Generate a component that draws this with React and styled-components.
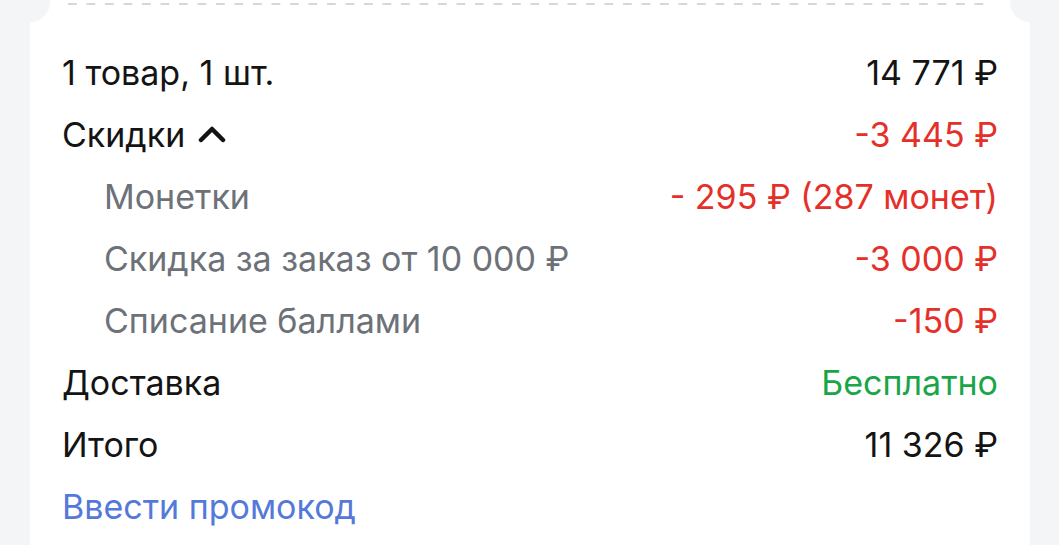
import React from 'react'
import styled, { createGlobalStyle } from 'styled-components'

const GlobalStyle = createGlobalStyle`
    html, body {
        margin: 0;
        padding: 0;
        background: #f4f5f7;
    }
    body {
        font-family: Inter, 'Noto Sans', sans-serif;
        -webkit-font-smoothing: antialiased;
    }
`

const Page = styled.div`
    width: 1059px;
    height: 545px;
    overflow: hidden;
    padding: 0 29px 0 30px;
    box-sizing: border-box;
`
const Card = styled.div`
    position: relative;
    background: #fff;
    height: 600px;
`
const Divider = styled.div`
    height: 8px;
    margin: 0 39px 0 38px;
    background-image: linear-gradient(to right, #d3d8df 50%, transparent 50%);
    background-size: 18.5px 2px;
    background-repeat: repeat-x;
    background-position: 0 3px;
`
const Notch = styled.div`
    position: absolute;
    top: -18px;
    ${props => (props.right ? 'right: -20px;' : 'left: -20px;')}
    width: 40px;
    height: 40px;
    border-radius: 50%;
    background: #f4f5f7;
`
const List = styled.div`
    padding: 33px 32px 0 32px;
    display: flex;
    flex-direction: column;
`
const Row = styled.div`
    height: 62px;
    display: flex;
    align-items: center;
    justify-content: space-between;
    font-size: 34px;
    padding-left: ${props => (props.sub ? '42px' : '0')};
`
const Label = styled.div`
    display: flex;
    align-items: center;
    gap: 13px;
    color: ${props => (props.sub ? '#6d7178' : '#141414')};
`
const Value = styled.div`
    color: ${props => props.color || '#141414'};
`
const PromoLink = styled.a`
    height: 62px;
    display: flex;
    align-items: center;
    font-size: 34px;
    color: #5479d9;
    text-decoration: none;
    cursor: pointer;
`

const RED = '#e5302a'
const GREEN = '#1aa548'

function ChevronUp() {
    return (
        <svg width='28' height='18' viewBox='0 0 28 18'>
            <path d='M3 15 L14 4 L25 15' fill='none' stroke='#141414' strokeWidth='4.5' strokeLinecap='round' strokeLinejoin='round' />
        </svg>
    )
}

const rows = [
    { label: '1 товар, 1 шт.', value: '14 771 ₽' },
    { label: 'Скидки', value: '-3 445 ₽', color: RED, toggle: true },
    { label: 'Монетки', value: '- 295 ₽ (287 монет)', color: RED, sub: true },
    { label: 'Скидка за заказ от 10 000 ₽', value: '-3 000 ₽', color: RED, sub: true },
    { label: 'Списание баллами', value: '-150 ₽', color: RED, sub: true },
    { label: 'Доставка', value: 'Бесплатно', color: GREEN },
    { label: 'Итого', value: '11 326 ₽' },
]

export default function App() {
    return (
        <>
            <GlobalStyle />
            <Page>
                <Card>
                    <Notch />
                    <Notch right />
                    <Divider />
                    <List>
                        {rows.map((r, i) => (
                            <Row key={i} sub={r.sub}>
                                <Label sub={r.sub}>
                                    {r.label}
                                    {r.toggle && <ChevronUp />}
                                </Label>
                                <Value color={r.color}>{r.value}</Value>
                            </Row>
                        ))}
                        <PromoLink>Ввести промокод</PromoLink>
                    </List>
                </Card>
            </Page>
        </>
    )
}
